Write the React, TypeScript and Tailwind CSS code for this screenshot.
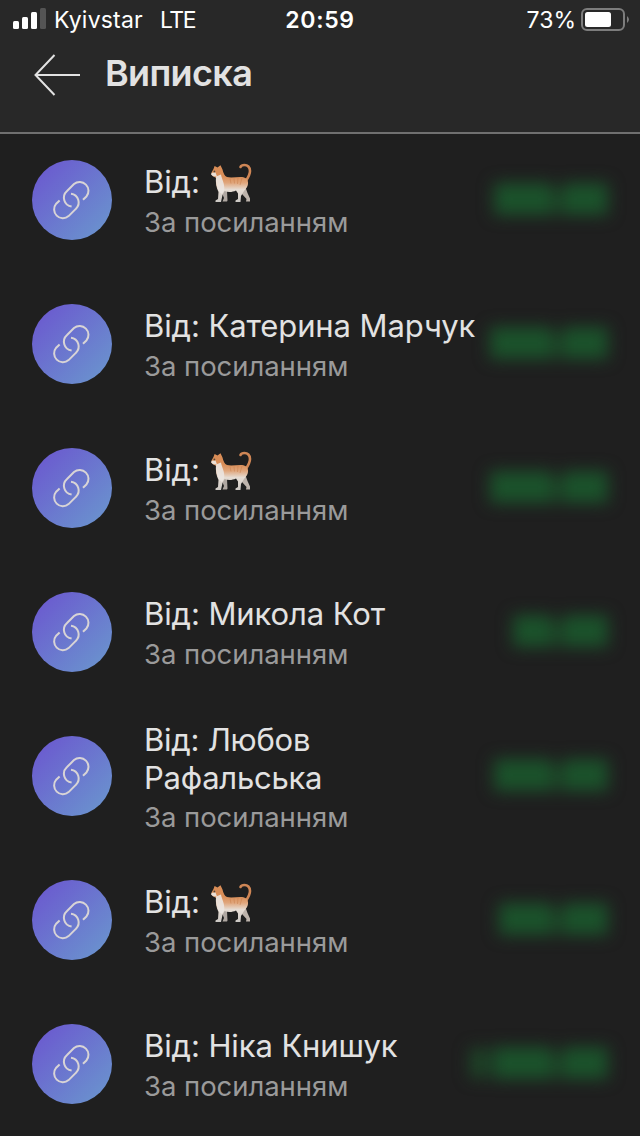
import React from "react";

type Row = { name?: string; amount: "short" | "medium" | "wide" | "wider" | "long"; wrap?: boolean };

const rows: Row[] = [
  { amount: "wide" },
  { name: "Катерина Марчук", amount: "wider" },
  { amount: "wider" },
  { name: "Микола Кот", amount: "short" },
  { name: "Любов Рафальська", amount: "wide", wrap: true },
  { amount: "medium" },
  { name: "Ніка Книшук", amount: "long" },
];

const amountWidth = {
  short: "w-[39px]",
  medium: "w-[53px]",
  wide: "w-[58px]",
  wider: "w-[62px]",
  long: "w-[59px]",
};

function Cat() {
  return (
    <svg width="42" height="42" viewBox="0 0 42 42" className="ml-[10px] shrink-0" role="img" aria-label="🐈">
      <defs>
        <linearGradient id="fur" x1="0" y1="0" x2="0" y2="1">
          <stop offset="0.3" stopColor="#d98d57" />
          <stop offset="0.48" stopColor="#e0a67c" />
          <stop offset="0.66" stopColor="#e6dcd3" />
          <stop offset="1" stopColor="#cbc7c3" />
        </linearGradient>
      </defs>
      <path d="M35.5 18.5C37.5 15.5 40 12 40 8C40 4 37.5 2 34.5 2C32.4 2 31 2.8 30.5 4" fill="none" stroke="#cf8655" strokeWidth="2.6" strokeLinecap="round" />
      <path d="M26 24L35 23L37.5 30L40 35.5L40 38.5L36 38.5L36.5 36L32 31Z" fill="#beb4ac" />
      <path d="M11 26L17 28L17.5 37.5L17 38.5L12.5 38.5L14 35L12 30Z" fill="#b0a8a2" />
      <path
        d="M3.5 6L4.6 3L7.5 4.5L10.5 2.2L12.5 6.5C13.3 10 14.5 13 17 14C21 15 27 13.8 32 14C36 14.3 38.5 17 38 21C37.7 24 36 25.5 34 28L31 33L30.5 39L25.5 39L25.5 37.5L28 36L28 30.5L26 27.5C22.5 29.3 18 29.5 14.5 28L12.5 32L11 39L5.5 39L5.5 37.5L8 36L8.5 29C6.5 25 5.3 20 6.2 15L3 13.2L1.2 11.5L1.8 9Z"
        fill="url(#fur)"
      />
      <path d="M6 13.5L11 11.5C12 17 14.8 20 14.3 27L12 31L9.5 29C6.5 24 5.3 19 6 13.5Z" fill="#ebe6e1" opacity="0.9" />
      <path d="M1.6 9.8L5.5 9.5L7 13.5L3 13.2L1.2 11.5Z" fill="#eadfd5" />
      <path d="M20 15.5l1 5M24 15.5l.5 5M28 15l-.5 6M32 15l-2 7" stroke="#c47c4a" strokeWidth="0.9" opacity="0.5" />
      <circle cx="4.4" cy="8.4" r="0.9" fill="#514536" />
    </svg>
  );
}

function LinkIcon() {
  return (
    <div className="size-20 shrink-0 rounded-full bg-[linear-gradient(135deg,#6b5ccf_12%,#6a93ce_92%)]">
      <svg width="80" height="80" viewBox="0 0 80 80" fill="none" stroke="#d8d4d6" strokeWidth="2">
        <path d="M51 39.7L54.4 36.5A8.8 8.8 0 0 0 42 24.1L34.8 31.3A8.8 8.8 0 0 0 39.6 46.5" />
        <path d="M27.6 40.5L24.2 43.7A8.8 8.8 0 0 0 36.6 56.1L43.8 48.9A8.8 8.8 0 0 0 39 33.7" />
      </svg>
    </div>
  );
}

function Amount({ size }: { size: Row["amount"] }) {
  return (
    <div className="mt-[-2px] mr-8 ml-auto flex h-8 shrink-0 items-center blur-[8px]">
      {size === "long" && <div className="mr-[5px] h-[30px] w-[18px] bg-[#1d4427]" />}
      <div className={`h-8 bg-[#1b522b] ${amountWidth[size]}`} />
      <div className="h-[26px] w-[11px] self-end bg-[#1d3b25]" />
      <div className="h-8 w-[45px] bg-[#1b522b]" />
    </div>
  );
}

export default function App() {
  return (
    <main className="flex h-[1136px] w-[640px] flex-col overflow-hidden bg-[#1f1f1f] font-['Inter','Liberation_Sans',sans-serif] text-[#e2e2e2]">
      <header className="h-[134px] shrink-0 border-b-2 border-[#707070] bg-[#282828]">
        <div className="grid h-10 grid-cols-3 items-center pr-[11px] pl-[13px] text-[23px] leading-10 text-white">
          <div className="flex items-center">
            <svg width="33" height="21" viewBox="0 0 33 21" fill="white" className="-mt-[3px]">
              <rect y="13" width="6" height="8" rx="1.5" />
              <rect x="9" y="9" width="6" height="12" rx="1.5" />
              <rect x="18" y="4" width="6" height="17" rx="1.5" />
              <rect x="27" width="6" height="21" rx="1.5" fill="#545454" />
            </svg>
            <span className="ml-2 tracking-[0.2px]">Kyivstar</span>
            <span className="ml-[17px] tracking-[-1.4px]">LTE</span>
          </div>
          <span className="-ml-[2px] text-center font-semibold tracking-[0.7px]">20:59</span>
          <div className="flex items-center justify-end">
            <span>73%</span>
            <svg width="48" height="24" viewBox="0 0 48 24" className="-mt-px ml-[5px]">
              <rect x="1" y="1" width="42" height="21" rx="5" fill="none" stroke="#7d7d7d" strokeWidth="2" />
              <rect x="4" y="4" width="26" height="15" rx="2.5" fill="white" />
              <path d="M46 8Q50 11.5 46 15Z" fill="#7d7d7d" />
            </svg>
          </div>
        </div>
        <div className="flex h-[70px] items-center pl-[34px]">
          <svg width="47" height="42" viewBox="0 0 47 42" fill="none" stroke="#e2e2e2" strokeWidth="2">
            <path d="M20.5 1L1.5 21L20.5 41M1.5 21H46" />
          </svg>
          <h1 className="-mt-[5px] ml-6 text-[36px] leading-[48px] font-semibold tracking-[-0.65px]">Виписка</h1>
        </div>
      </header>
      <ul className="flex flex-col">
        {rows.map((row, i) => (
          <li key={i} className={`flex h-36 shrink-0 items-center pl-8 ${i === 0 ? "-mt-[6px]" : ""}`}>
            <LinkIcon />
            <div className={`ml-8 shrink-0 ${row.wrap ? "w-[240px] pt-[5px]" : "pt-[6px] whitespace-nowrap"}`}>
              <div className={`flex text-[31px] leading-[38px] ${row.wrap ? "tracking-[-0.25px]" : "h-[38px] tracking-[-0.1px]"}`}>
                <span>Від: {row.name}</span>
                {!row.name && <Cat />}
              </div>
              <div className={`text-[27.5px] tracking-[-0.05px] text-[#9a9a9a] ${row.wrap ? "leading-10" : "leading-[42px]"}`}>За посиланням</div>
            </div>
            <Amount size={row.amount} />
          </li>
        ))}
      </ul>
    </main>
  );
}
